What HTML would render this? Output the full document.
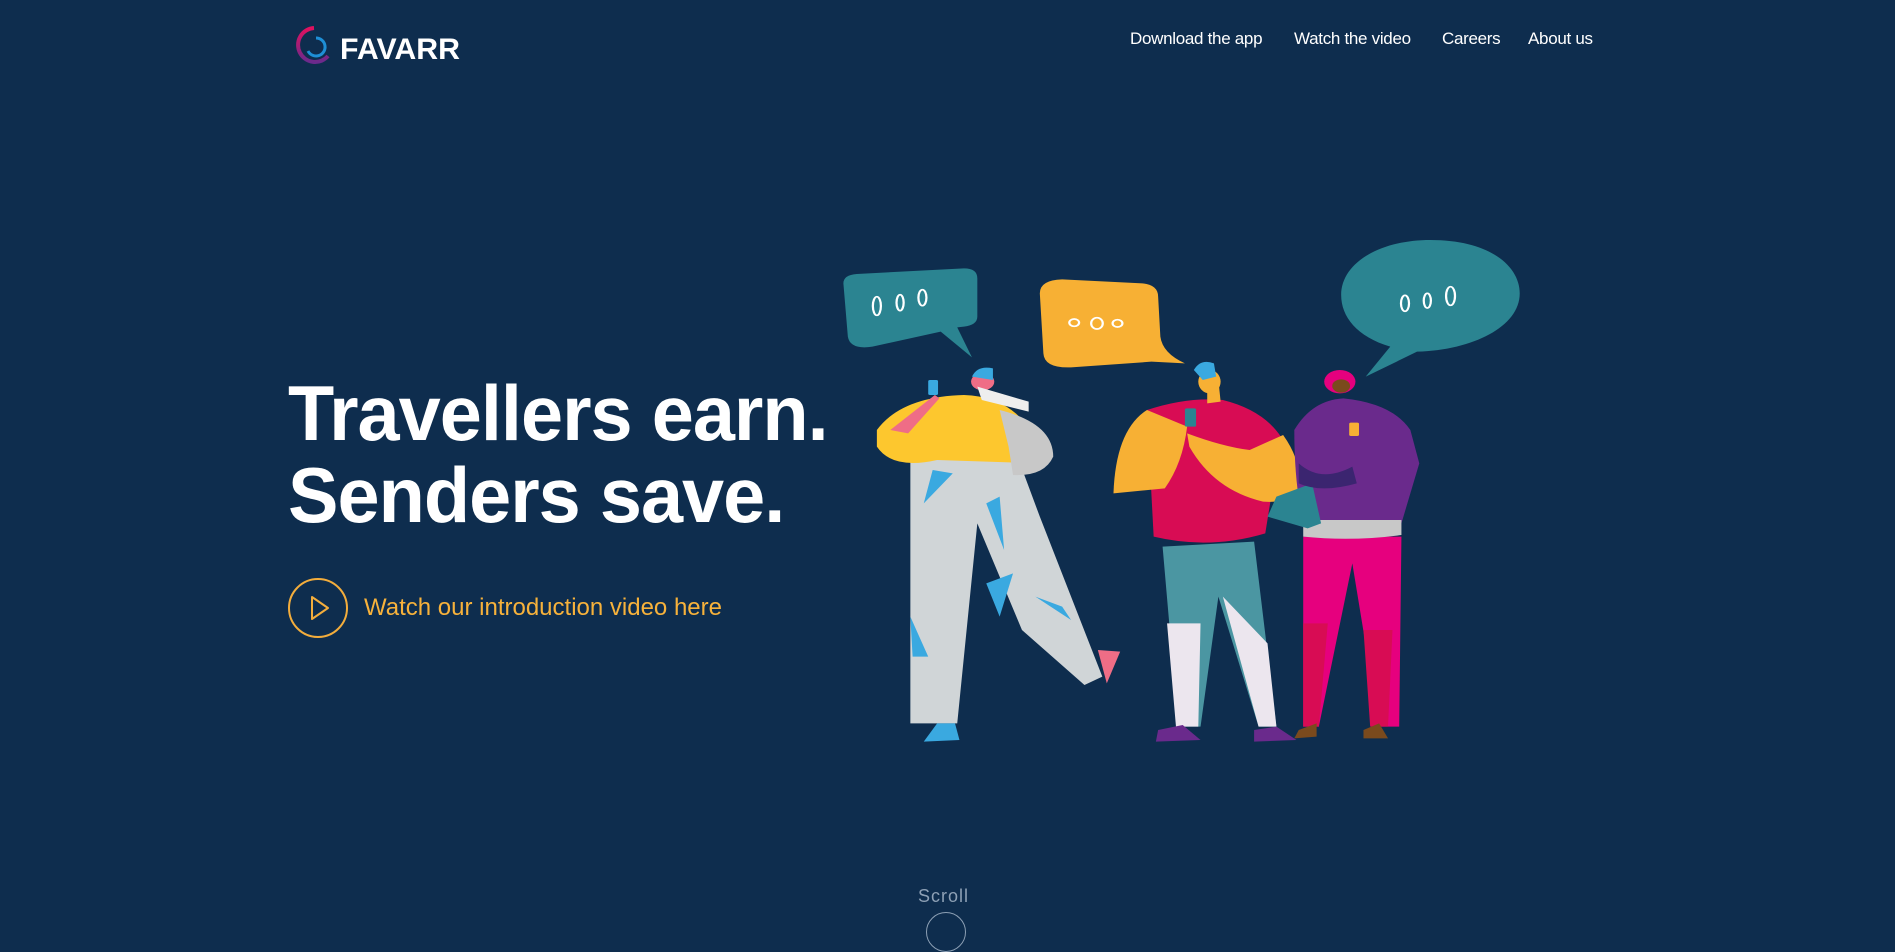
<!DOCTYPE html>
<html><head><meta charset="utf-8"><style>
*{margin:0;padding:0;box-sizing:border-box}
body{width:1895px;height:920px;overflow:hidden;background:#0e2d4e;font-family:"Liberation Sans",sans-serif;position:relative;color:#fff}
.logo{position:absolute;left:294px;top:24px;width:170px;height:44px}
.nav{position:absolute;top:29px;font-size:17px;color:#fff;letter-spacing:-0.3px}
.h{position:absolute;left:288px;font-weight:bold;font-size:78px;white-space:nowrap;transform-origin:left top;letter-spacing:-1px}
.play{position:absolute;left:288px;top:578px;width:60px;height:60px;border:2px solid #f3ad3c;border-radius:50%}
.vt{position:absolute;left:364px;top:594px;font-size:24px;color:#f7b23b;white-space:nowrap}
.scroll{position:absolute;left:918px;top:886px;font-size:18px;color:#8da0b5;letter-spacing:1px}
.sc{position:absolute;left:926px;top:912px;width:40px;height:40px;border:1px solid #8da0b5;border-radius:50%}
</style></head><body>
<svg class="logo" viewBox="0 0 170 44">
<defs><linearGradient id="g" x1="0" y1="0" x2="0" y2="1"><stop offset="0" stop-color="#e0115f"/><stop offset="1" stop-color="#6a2a8c"/></linearGradient></defs>
<path d="M20 4 A17 17 0 1 0 34 32" fill="none" stroke="url(#g)" stroke-width="4"/>
<path d="M22 14 A9 9 0 1 1 14 27" fill="none" stroke="#1e8fd6" stroke-width="3"/>
<text x="46" y="35" font-family="Liberation Sans" font-weight="bold" font-size="30" fill="#fff" textLength="120" lengthAdjust="spacingAndGlyphs">FAVARR</text>
</svg>
<div class="nav" style="left:1130px">Download the app</div>
<div class="nav" style="left:1294px">Watch the video</div>
<div class="nav" style="left:1442px">Careers</div>
<div class="nav" style="left:1528px">About us</div>
<div class="h" style="top:368px;transform:scaleX(0.97)">Travellers earn.</div>
<div class="h" style="top:450px;transform:scaleX(0.97)">Senders save.</div>
<div class="play"><svg width="56" height="56" viewBox="0 0 56 56"><path d="M22 17 L38 28 L22 39 Z" fill="none" stroke="#f3ad3c" stroke-width="2" stroke-linejoin="round"/></svg></div>
<div class="vt">Watch our introduction video here</div>
<svg style="position:absolute;left:830px;top:230px" width="700" height="520" viewBox="0 0 1568 1560" preserveAspectRatio="none">
<path d="M30 160 Q30 135 60 132 L300 115 Q330 115 330 145 L330 260 Q330 285 300 290 L285 292 L318 382 L248 305 L95 350 Q45 360 40 320 Z" fill="#2b8491"/>
<ellipse cx="105" cy="228" rx="9" ry="28" fill="none" stroke="#fff" stroke-width="5"/>
<ellipse cx="157" cy="218" rx="8" ry="24" fill="none" stroke="#fff" stroke-width="5"/>
<ellipse cx="207" cy="203" rx="9" ry="24" fill="none" stroke="#fff" stroke-width="5"/>
<path d="M470 190 Q470 150 520 148 L700 160 Q735 165 735 200 L740 320 Q745 370 795 400 L720 395 L540 412 Q480 415 478 370 Z" fill="#f7b034"/>
<circle cx="547" cy="278" r="11" fill="none" stroke="#fff" stroke-width="5"/>
<ellipse cx="598" cy="280" rx="13" ry="17" fill="none" stroke="#fff" stroke-width="5"/>
<circle cx="644" cy="280" r="11" fill="none" stroke="#fff" stroke-width="5"/>
<path d="M1345 30 C1480 30 1545 110 1545 190 C1545 290 1440 360 1315 365 L1200 440 L1255 350 C1180 320 1145 260 1145 195 C1145 100 1230 30 1345 30 Z" fill="#2b8491"/>
<ellipse cx="1288" cy="220" rx="9" ry="24" fill="none" stroke="#fff" stroke-width="5"/>
<ellipse cx="1338" cy="212" rx="8" ry="22" fill="none" stroke="#fff" stroke-width="5"/>
<ellipse cx="1390" cy="198" rx="10" ry="28" fill="none" stroke="#fff" stroke-width="5"/>
<path d="M180 690 L420 680 L470 860 L610 1340 L570 1365 L430 1200 L330 880 L285 1480 L180 1480 Z" fill="#d0d5d7"/>
<path d="M230 720 L275 730 L210 820 Z M350 820 L380 800 L390 960 Z M350 1060 L410 1030 L380 1160 Z M460 1100 L520 1130 L540 1170 Z M180 1160 L220 1280 L185 1280 Z" fill="#3aa9e0"/>
<path d="M105 600 Q160 500 300 495 Q420 500 470 650 L470 700 L240 690 Q140 720 105 650 Z" fill="#fdc72e"/>
<path d="M380 540 Q500 580 500 680 Q480 740 410 735 L400 650 Z" fill="#c8c8c8"/>
<path d="M135 600 L235 495 L245 505 L175 610 Z" fill="#ef6d86"/>
<rect x="220" y="450" width="22" height="45" rx="4" fill="#3aa9e0"/>
<circle cx="342" cy="455" r="26" fill="#ef6d86"/>
<path d="M318 440 Q330 405 365 415 L365 450 Z" fill="#3aa9e0"/>
<path d="M330 470 L445 515 L445 545 L340 510 Z" fill="#eee"/>
<path d="M240 1480 L280 1480 L290 1530 L210 1535 Z" fill="#3aa9e0"/>
<path d="M600 1260 L650 1265 L620 1360 Z" fill="#ef6d86"/>
<path d="M745 950 L950 935 L1000 1490 L960 1490 L870 1100 L830 1490 L780 1490 Z" fill="#4b96a2"/>
<path d="M755 1180 L830 1180 L825 1490 L775 1490 Z M880 1100 L980 1240 L1000 1490 L960 1490 Z" fill="#ece6ee"/>
<path d="M710 540 Q800 500 880 510 Q970 540 1010 620 L975 910 Q850 960 725 920 Z" fill="#d80c54"/>
<path d="M710 540 Q640 600 635 790 L750 775 Q790 700 800 590 Z" fill="#f7b034"/>
<path d="M800 610 Q880 650 940 660 L1015 615 Q1060 700 1050 780 Q1030 820 970 815 Q860 780 805 650 Z" fill="#f7b034"/>
<rect x="795" y="535" width="25" height="55" rx="4" fill="#2b8491"/>
<path d="M845 460 L870 450 L875 515 L845 520 Z" fill="#f7b034"/>
<ellipse cx="850" cy="455" rx="25" ry="35" fill="#f7b034"/>
<path d="M815 420 Q830 385 860 400 L865 440 L835 450 Z" fill="#3aa9e0"/>
<path d="M735 1500 L790 1485 L830 1530 L730 1535 Z M950 1500 L1000 1490 L1045 1530 L950 1535 Z" fill="#6a2a8c"/>
<path d="M1060 920 L1280 920 L1275 1490 L1230 1490 L1170 1000 L1095 1490 L1060 1490 Z" fill="#e6007e"/>
<path d="M1060 1180 L1115 1180 L1095 1490 L1060 1490 Z M1195 1200 L1260 1200 L1250 1490 L1210 1490 Z" fill="#d80c54"/>
<path d="M1040 600 Q1080 510 1150 505 Q1260 520 1300 600 L1320 700 L1280 880 L1060 880 Q1040 760 1040 600 Z" fill="#6a2a8c"/>
<path d="M1060 870 L1280 870 L1280 915 Q1170 935 1060 920 Z" fill="#c8c8c8"/>
<path d="M1000 800 L1080 760 L1100 880 L1070 895 L980 860 Z" fill="#2b8491"/>
<path d="M1050 700 Q1100 760 1170 710 L1180 760 Q1100 790 1050 760 Z" fill="#3b2570"/>
<circle cx="1142" cy="455" r="35" fill="#e6007e"/>
<circle cx="1145" cy="468" r="20" fill="#7a4a1d"/>
<rect x="1163" y="578" width="22" height="40" rx="4" fill="#f7b034"/>
<path d="M1050 1500 L1090 1480 L1090 1520 L1040 1525 Z M1195 1500 L1230 1480 L1250 1525 L1195 1525 Z" fill="#7a4a1d"/>
</svg>
<div class="scroll">Scroll</div>
<div class="sc"></div>
</body></html>
